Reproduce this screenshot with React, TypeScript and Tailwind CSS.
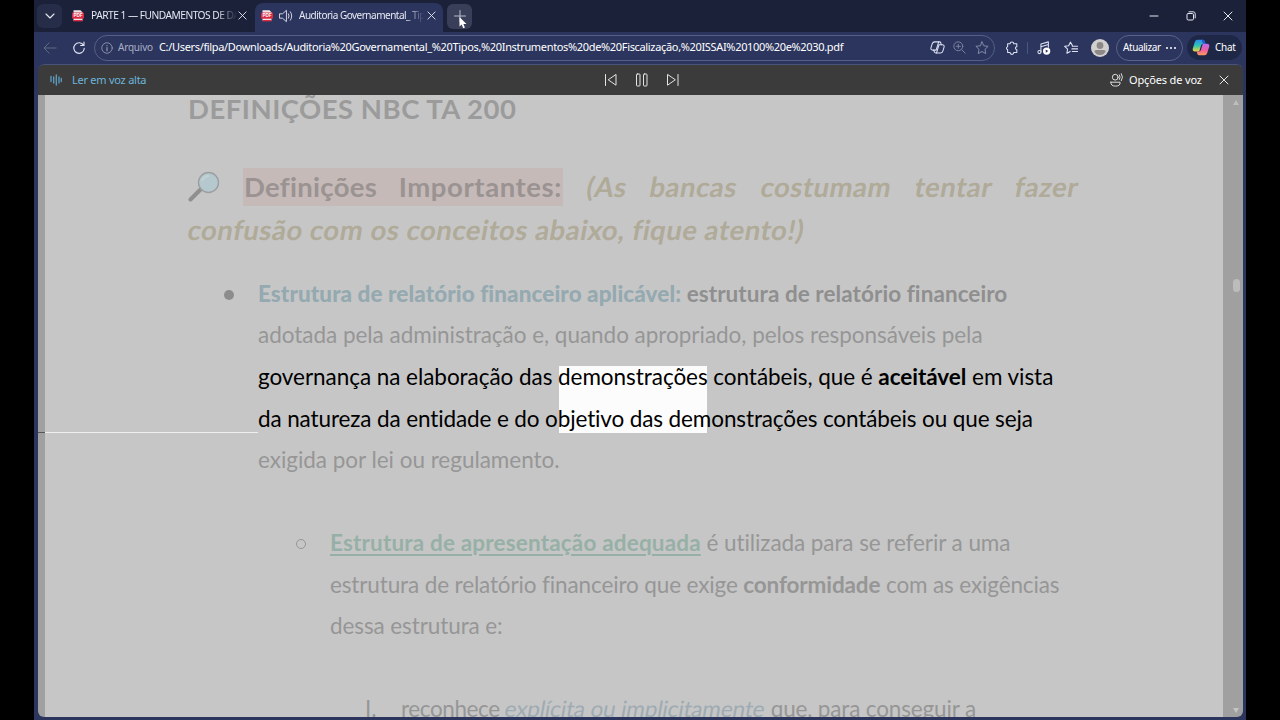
import type { ReactNode } from "react";

interface IconProps {
  className: string;
  children: ReactNode;
  box?: string;
}

function Icon({ className, children, box = "0 0 16 16" }: IconProps) {
  return (
    <svg
      viewBox={box}
      fill="none"
      stroke="currentColor"
      strokeLinecap="round"
      strokeLinejoin="round"
      className={`shrink-0 ${className}`}
    >
      {children}
    </svg>
  );
}

function PdfIcon() {
  return (
    <svg viewBox="0 0 12 13" className="w-3 h-[13px] shrink-0">
      <path d="M1.5 1.2h7l2 2v8.6h-9z" fill="#f3e4e8" />
      <rect x="0" y="3.6" width="12" height="6.2" rx="1" fill="#d92b43" />
      <path d="M1.5 11h9v1.4h-9z" fill="#d92b43" />
      <text x="6" y="8.4" fontSize="4.6" fontWeight="700" fill="#fff" textAnchor="middle" fontFamily="Liberation Sans">PDF</text>
    </svg>
  );
}

function CloseIcon({ className }: { className: string }) {
  return (
    <Icon className={className} box="0 0 10 10">
      <path d="M1 1l8 8M9 1l-8 8" />
    </Icon>
  );
}

function TitleBar() {
  return (
    <div className="h-8 bg-[#1a2139] flex items-center shrink-0 text-[#e6e8f2]">
      <div className="ml-[3px] w-[25px] h-6 rounded-md bg-[#262d49] flex items-center justify-center">
        <Icon className="w-[10px] h-[10px]" box="0 0 10 10">
          <path d="M1 3l4 4 4-4" strokeWidth="1.1" />
        </Icon>
      </div>

      {/* Background tab */}
      <div className="ml-[10px] w-[183px] flex items-center">
        <PdfIcon />
        <span className="ml-[7px] w-[146px] text-[10.2px] tracking-[-0.5px] whitespace-nowrap overflow-hidden [mask-image:linear-gradient(to_right,#000_86%,transparent)]">
          PARTE 1 — FUNDAMENTOS DE DADOS
        </span>
        <CloseIcon className="ml-[1px] w-[9px] h-[9px]" />
      </div>

      {/* Active tab */}
      <div className="self-end w-[188px] h-[29px] pb-1 pl-[6px] rounded-t-lg bg-[#2c355d] flex items-center">
        <PdfIcon />
        <Icon className="ml-[6px] w-[14px] h-[14px]">
          <path d="M1 5.5h3L8.500 1.500v13L4 10.500H1z" />
          <path d="M10.800 5.500q1.600 2.500 0 5M13 3.200q3.200 4.800 0 9.600" />
        </Icon>
        <span className="ml-[6px] w-[125px] text-[10px] tracking-[-0.5px] whitespace-nowrap overflow-hidden [mask-image:linear-gradient(to_right,#000_86%,transparent)]">
          Auditoria Governamental_ Tipos
        </span>
        <CloseIcon className="ml-[3px] w-[9px] h-[9px]" />
      </div>

      <div className="relative ml-1 w-[25px] h-[25px] rounded-md bg-[#3a3f59] flex items-center justify-center">
        <Icon className="w-3 h-3" box="0 0 12 12">
          <path d="M6 .5v11M.5 6h11" stroke="#b9bccb" />
        </Icon>
        <svg viewBox="0 0 8 12" className="absolute left-[12px] top-[13px] w-2 h-3">
          <path d="M.5 0v9.500l2.200-2 1.500 3.700 1.700-.7-1.500-3.500h3.100z" fill="#fff" />
        </svg>
      </div>

      <div className="ml-auto mr-[13px] flex items-center">
        <Icon className="w-[10px] h-[10px]" box="0 0 10 10">
          <path d="M1 5h8" />
        </Icon>
        <Icon className="ml-[27px] w-[10px] h-[10px]" box="0 0 10 10">
          <rect x="1" y="2.500" width="6.500" height="6.500" rx="1.200" />
          <path d="M3 .8h4.200q2 0 2 2V7" />
        </Icon>
        <CloseIcon className="ml-[27px] w-[10px] h-[10px]" />
      </div>
    </div>
  );
}

function CopilotLogo() {
  return (
    <svg viewBox="0 0 18 17" className="w-[18px] h-[17px] shrink-0">
      <defs>
        <linearGradient id="cool" x1="0" y1="0" x2="0" y2="1">
          <stop offset="0" stopColor="#2b8cf0" />
          <stop offset=".5" stopColor="#2fc6b0" />
          <stop offset="1" stopColor="#f3d33c" />
        </linearGradient>
        <linearGradient id="warm" x1="0" y1="0" x2="0" y2="1">
          <stop offset="0" stopColor="#b56cf0" />
          <stop offset=".55" stopColor="#ee5fa0" />
          <stop offset="1" stopColor="#ff9a5a" />
        </linearGradient>
      </defs>
      <path d="M5.500.8h5.200q1.600 0 2 1.500l.7 2.400H11q-1.400 0-1.900 1.600L7.200 12.500H3Q.2 12.500.8 9.500L2.800 3Q3.500.8 5.500.8z" fill="url(#cool)" />
      <path d="M9.800.8h1q1.500 0 1.900 1.500l.8 2.500h-2.700z" fill="#2456d8" />
      <path d="M12.500 16.200H7.300q-1.600 0-2-1.500l-.6-2.200H7q1.400 0 1.900-1.600l1.900-6.100H15q2.800 0 2.200 3l-2 6.200q-.7 2.200-2.700 2.200z" fill="url(#warm)" />
    </svg>
  );
}

function Toolbar() {
  return (
    <div className="h-8 pb-px bg-[#2c355d] flex items-center shrink-0 text-[#dfe3f3]">
      <Icon className="ml-[9px] w-[14px] h-[14px] text-[#69718f]">
        <path d="M15 8H1.500M7 2L1.200 8 7 14" />
      </Icon>
      <Icon className="ml-[15px] w-[14px] h-[14px]">
        <path d="M13.200 5A6 6 0 1 0 14 8.500M13.700 1.200v4H9.800" strokeWidth="1.3" />
      </Icon>

      {/* Address field */}
      <div className="ml-[8px] w-[901px] h-[26px] rounded-full border border-[#565f87] flex items-center pl-[6px] pr-[5px]">
        <Icon className="w-3 h-3 text-[#a2a8c0]">
          <circle cx="8" cy="8" r="7" />
          <path d="M8 7.500v4M8 4.700v.2" strokeWidth="1.400" />
        </Icon>
        <span className="ml-[5px] w-[41px] text-[10px] text-[#a9afc6] tracking-[-0.2px]">Arquivo</span>
        <span className="text-[11px] text-white tracking-[-0.335px] whitespace-nowrap">
          C:/Users/filpa/Downloads/Auditoria%20Governamental_%20Tipos,%20Instrumentos%20de%20Fiscalização,%20ISSAI%20100%20e%2030.pdf
        </span>
        <Icon className="ml-auto w-[15px] h-[15px]">
          <path d="M5 2h5q1.200 0 1.600 1.200L12 5h1q2.500 0 2 2.500l-1.200 4.200q-.6 2.100-2.300 2.100H6.200q-1.200 0-1.600-1.200L4 10.800H3Q.5 10.800 1 8.300l1.300-4.200Q3 2 5 2z" strokeWidth="1.100" />
          <path d="M9.300 2L6.500 10.800H4M7 13.800l2.700-8.800H12" strokeWidth="1.100" />
        </Icon>
        <Icon className="ml-[8px] w-[13px] h-[13px] text-[#7c84a4]">
          <circle cx="6.500" cy="6.500" r="5.500" strokeWidth="1.200" />
          <path d="M6.500 4v5M4 6.500h5M10.600 10.600L15 15" strokeWidth="1.200" />
        </Icon>
        <Icon className="ml-[9px] w-[14px] h-[14px] text-[#8d95b3]">
          <path d="M8 1l2.100 4.500 4.900.6-3.600 3.400.9 4.900L8 12l-4.300 2.400.9-4.900L1 6.100l4.900-.6z" />
        </Icon>
      </div>

      <Icon className="ml-[10px] w-[14px] h-[14px]">
        <path d="M3 3.200h2.800a2.100 2.100 0 0 1 4.200 0h3.500v3.300a1.600 1.600 0 0 0 0 3.200v3.500H10a2.100 2.100 0 0 1-4.200 0H3V9.800a1.700 1.700 0 0 1 0-3.300z" strokeWidth="1.200" />
      </Icon>
      <div className="ml-[8px] w-px h-3 bg-[#4c5680]" />
      <Icon className="ml-[9px] w-[14px] h-[14px]">
        <path d="M4.500 12.500v-9L13 1v6M4.500 6.500L13 4" strokeWidth="1.200" />
        <circle cx="2.800" cy="12.600" r="1.800" strokeWidth="1.200" />
        <circle cx="11" cy="11.500" r="4.200" fill="#fff" stroke="none" />
        <path d="M10 9.700l2.800 1.800-2.800 1.800z" fill="#2c355d" stroke="none" />
      </Icon>
      <Icon className="ml-[13px] w-[14px] h-[14px]">
        <path d="M9.500 5L7.300 1.300 5.300 5.400.8 6.100l3.300 3.200-.8 4.600 3.800-2M9.500 6h6M9 9h6.500M9.500 12h6" strokeWidth="1.200" />
      </Icon>
      <svg viewBox="0 0 18 18" className="ml-[13px] w-[18px] h-[18px] shrink-0">
        <circle cx="9" cy="9" r="9" fill="#d2d0cf" />
        <circle cx="9" cy="6.500" r="3.400" fill="#8b8887" />
        <path d="M3.500 12.500q0-1.500 1.500-1.500h8q1.500 0 1.500 1.500-1.500 3.500-5.500 3.500t-5.500-3.500z" fill="#8b8887" />
      </svg>
      <div className="ml-[7px] w-[67px] h-[26px] rounded-full border border-[#59628a] flex items-center pl-[6px]">
        <span className="text-[10px] text-white tracking-[-0.4px]">Atualizar</span>
        <div className="ml-auto mr-[6px] flex gap-[2px]">
          <i className="size-[2px] rounded-full bg-white" />
          <i className="size-[2px] rounded-full bg-white" />
          <i className="size-[2px] rounded-full bg-white" />
        </div>
      </div>
      <div className="ml-1 w-[55px] h-[25px] rounded-full bg-[#1f2747] flex items-center pl-[5px]">
        <CopilotLogo />
        <span className="ml-[5px] text-[10px] text-white tracking-[-0.3px]">Chat</span>
      </div>
    </div>
  );
}

function ReadAloudBar() {
  return (
    <div className="h-[31px] shrink-0 bg-[#3b3b3b] border-t border-[#48537a] rounded-t-md flex items-center text-[#e4e4e4]">
      <Icon className="ml-[12px] w-3 h-3 text-[#5e9fc4]" box="0 0 12 12">
        <path d="M1 2.500v5M3.700 3v6M6.300 1v10M9 3v6M11.300 4.500v3" strokeWidth="1.300" />
      </Icon>
      <span className="ml-[10px] w-[532px] text-[11px] text-[#6cb4da] tracking-[-0.25px]">Ler em voz alta</span>
      <div className="flex items-center gap-[17px]">
        <Icon className="w-[14px] h-[14px]" box="0 0 14 14">
          <path d="M1.500 1.500v11M12 1.800v10.400L4.500 7z" />
        </Icon>
        <Icon className="w-[14px] h-[14px]" box="0 0 14 14">
          <rect x="1.500" y="1" width="3.500" height="12" rx=".8" />
          <rect x="8.500" y="1" width="3.500" height="12" rx=".8" />
        </Icon>
        <Icon className="w-[14px] h-[14px]" box="0 0 14 14">
          <path d="M12 1.500v11M1.500 1.800v10.400L9 7z" />
        </Icon>
      </div>
      <Icon className="ml-auto w-[14px] h-[14px]">
        <circle cx="6" cy="4.800" r="3.300" strokeWidth="1.100" />
        <path d="M1 10.500h10.500q.5 4.500-5.200 4.500T1 10.500zM10.800 2.200q1.600 2.600 0 5.200M13 .8q2.700 4 0 8" strokeWidth="1.100" />
      </Icon>
      <span className="ml-[5px] w-[73px] text-[11px] text-white whitespace-nowrap tracking-[-0.15px]">Opções de voz</span>
      <CloseIcon className="ml-[17px] mr-[14px] w-[10px] h-[10px]" />
    </div>
  );
}

function MagnifierEmoji() {
  return (
    <svg viewBox="0 0 32 32" className="w-8 h-8 shrink-0">
      <path d="M2.500 28.500L12.500 18.500" stroke="#8f8f8f" strokeWidth="4" strokeLinecap="round" />
      <circle cx="20.500" cy="11.500" r="10" fill="#b5c8cd" stroke="#9b9fa0" strokeWidth="1.400" />
      <path d="M14 10q2-5 7-5" stroke="#c3d2d6" strokeWidth="2" fill="none" />
    </svg>
  );
}

function Document() {
  return (
    <div className="relative flex-1 w-[1178px] bg-[#c6c6c6] overflow-hidden font-[Lato,sans-serif] text-[#969696] whitespace-nowrap">
      {/* Reading position */}
      <div className="absolute left-[514px] top-[271px] w-[148px] h-[67px] bg-[#fcfcfc]" />
      <div className="absolute left-0 top-[337px] w-[213px] h-px bg-[#efefef]" />

      <div className="relative pl-[143px]">
        <h1 className="h-[72px] -mt-[6px] text-[27.5px] leading-10 font-bold text-[#9b9b9b] tracking-[0.5px]">DEFINIÇÕES NBC TA 200</h1>
        <div className="w-[891px] h-[43px] mt-[4px] flex items-center text-[27.5px] font-bold text-[#b0aa99]">
          <MagnifierEmoji />
          <span className="ml-[23px] w-[320px] h-[38px] flex items-center justify-between px-[1px] bg-[#c5bab8] text-[#9a9392]">
            <span className="tracking-[0.3px]">Definições</span>
            <span className="tracking-[0.6px]">Importantes:</span>
          </span>
          <div className="ml-[24px] flex-1 flex justify-between tracking-[0.5px]">
            <span className="-skew-x-10">(As</span>
            <span className="-skew-x-10">bancas</span>
            <span className="-skew-x-10">costumam</span>
            <span className="-skew-x-10">tentar</span>
            <span className="-skew-x-10">fazer</span>
          </div>
        </div>
        <div className="w-fit h-[43px] leading-[43px] text-[27.5px] font-bold text-[#b0aa99] tracking-[0.5px] -skew-x-10">
          confusão com os conceitos abaixo, fique atento!)
        </div>

        <div className="mt-[21.5px] flex text-[22.5px] leading-[41.7px]">
          <div className="w-[70px] pl-[36px] pt-[17px]">
            <div className="size-[10px] rounded-full bg-[#8c8c8c]" />
          </div>
          <div>
            <div className="font-bold text-[#8f8f8f] tracking-[0.07px]"><b className="text-[#94a9b0]">Estrutura de relatório financeiro aplicável:</b> estrutura de relatório financeiro</div>
            <div className="tracking-[-0.03px]">adotada pela administração e, quando apropriado, pelos responsáveis pela</div>
            <div className="text-black tracking-[-0.05px]">governança na elaboração das demonstrações contábeis, que é <b>aceitável</b> em vista</div>
            <div className="text-black tracking-[-0.12px]">da natureza da entidade e do objetivo das demonstrações contábeis ou que seja</div>
            <div className="tracking-[-0.03px]">exigida por lei ou regulamento.</div>
          </div>
        </div>

        <div className="mt-[41px] flex text-[22.5px] leading-[41.7px]">
          <div className="w-[142px] pl-[108px] pt-[17px]">
            <div className="size-[10px] rounded-full border border-[#969696]" />
          </div>
          <div>
            <div className="tracking-[-0.08px]"><b className="text-[#97b0a6] tracking-[0.17px] underline decoration-2 underline-offset-[3px]">Estrutura de apresentação adequada</b> é utilizada para se referir a uma</div>
            <div className="tracking-[-0.13px]">estrutura de relatório financeiro que exige <b>conformidade</b> com as exigências</div>
            <div className="tracking-[-0.1px]">dessa estrutura e:</div>
          </div>
        </div>

        <div className="mt-[40.5px] flex text-[22.5px] leading-[41.7px]">
          <span className="w-[213px] pl-[177px]">I.</span>
          <span className="tracking-[-0.15px]"><span className="tracking-[-0.4px]">reconhece</span> <span className="inline-block -skew-x-10 text-[#9eabb2] underline decoration-1">explícita ou implicitamente</span> que, para conseguir a</span>
        </div>
      </div>
    </div>
  );
}

export default function App() {
  return (
    <div className="w-[1280px] h-[720px] bg-black flex justify-center overflow-hidden">
      <div className="w-[1212px] h-full bg-[#2c355d] flex flex-col font-['Noto_Sans',sans-serif]">
        <TitleBar />
        <Toolbar />
        <div className="ml-1 w-[1205px] h-[653px] flex flex-col rounded-t-md rounded-b-md overflow-hidden">
          <ReadAloudBar />
          <div className="flex-1 min-h-0 flex bg-[#a0a0a0]">
            <div className="w-[7px] pt-[337px]">
              <div className="h-px bg-[#555]" />
            </div>
            <Document />
            <div className="w-5 flex flex-col items-end pr-[3px] pt-[5px]">
              <div className="border-x-[3px] border-b-[5px] border-x-transparent border-b-[#bdbdbd] mr-[1px]" />
              <div className="mt-[174px] w-[7px] h-[13px] rounded-full bg-[#bcbcbc]" />
              <div className="mt-auto mb-1 mr-[1px] border-x-[3px] border-t-[5px] border-x-transparent border-t-[#c4c4c4]" />
            </div>
          </div>
        </div>
      </div>
    </div>
  );
}
